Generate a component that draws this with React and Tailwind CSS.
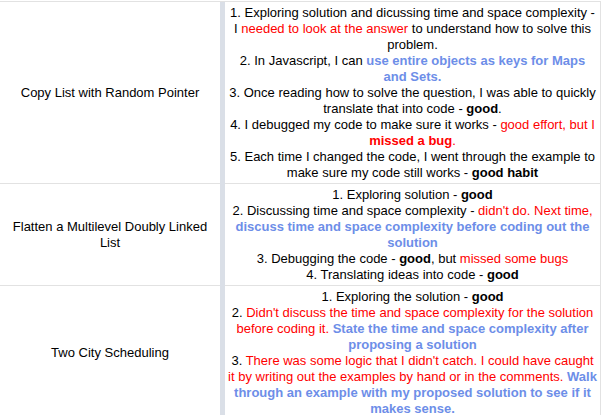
import React from "react";

const R = ({ children }) => <span className="text-[#ff0000]">{children}</span>;
const B = ({ children }) => <span className="text-[#6d8ee8] font-bold">{children}</span>;
const G = ({ children }) => <span className="font-bold">{children}</span>;

const rows = [
  {
    title: "Copy List with Random Pointer",
    items: [
      <>1. Exploring solution and dicussing time and space complexity -<br />I <R>needed to look at the answer</R> to understand how to solve this problem.</>,
      <>2. In Javascript, I can <B>use entire objects as keys for Maps and Sets.</B></>,
      <>3. Once reading how to solve the question, I was able to quickly translate that into code - <G>good</G>.</>,
      <>4. I debugged my code to make sure it works - <R>good effort, but I <b>missed a bug</b>.</R></>,
      <>5. Each time I changed the code, I went through the example to make sure my code still works - <G>good habit</G></>,
    ],
  },
  {
    title: "Flatten a Multilevel Doubly Linked List",
    items: [
      <>1. Exploring solution - <G>good</G></>,
      <>2. Discussing time and space complexity - <R>didn't do. Next time, </R><B>discuss time and space complexity before coding out the solution</B></>,
      <>3. Debugging the code - <G>good</G>, but <R>missed some bugs</R></>,
      <>4. Translating ideas into code - <G>good</G></>,
    ],
  },
  {
    title: "Two City Scheduling",
    items: [
      <>1. Exploring the solution - <G>good</G></>,
      <>2. <R>Didn't discuss the time and space complexity for the solution before coding it.</R> <B>State the time and space complexity after proposing a solution</B></>,
      <>3. <R>There was some logic that I didn't catch. I could have caught it by writing out the examples by hand or in the comments.</R> <B>Walk through an example with my proposed solution to see if it makes sense.</B></>,
    ],
  },
];

export default function App() {
  return (
    <div className="w-[602px] h-[415px] overflow-hidden bg-white pt-[1px] text-black text-[13px] leading-[16px]" style={{ fontFamily: '"Liberation Sans", Arial, sans-serif' }}>
      <div className="w-[601px] border-t border-r border-[#e2e2e2] grid grid-cols-[220px_5px_375px]">
        <div className="col-start-2 row-start-1 row-span-3 bg-[#dadfe7]" />
        {rows.map((r, i) => (
          <React.Fragment key={i}>
            <div
              className={
                "col-start-1 flex items-center justify-center text-center px-[6px] border-b border-[#e2e2e2] " +
                (i === 0 ? "row-start-1" : i === 1 ? "row-start-2" : "row-start-3")
              }
            >
              {r.title}
            </div>
            <div
              className={
                "col-start-3 text-center px-[2px] pt-[3px] pb-[2px] border-b border-[#e2e2e2] " +
                (i === 0 ? "row-start-1" : i === 1 ? "row-start-2" : "row-start-3")
              }
            >
              {r.items.map((it, j) => (
                <p key={j}>{it}</p>
              ))}
            </div>
          </React.Fragment>
        ))}
      </div>
    </div>
  );
}
